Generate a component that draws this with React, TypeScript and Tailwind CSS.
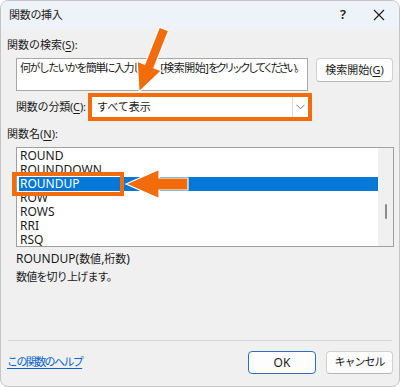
import React from "react";

const FONT = { fontFamily: '"Noto Sans", "Noto Sans CJK JP", sans-serif' };

const ITEMS = ["ROUND", "ROUNDDOWN", "ROUNDUP", "ROW", "ROWS", "RRI", "RSQ"];

function Mn({ c }: { c: string }) {
  return <span className="underline underline-offset-2">{c}</span>;
}

export default function App() {
  return (
    <div className="w-[400px] h-[387px] bg-white text-[12px] text-[#1b1b1b]" style={FONT}>
      <div className="relative w-full h-full flex flex-col rounded-[8px] border border-[#c4c4c4] bg-[#f0f0f0] overflow-hidden">
        {/* title bar */}
        <div className="h-[28px] shrink-0 bg-[#eef2f9] flex items-center pl-[8px] pr-[14px]">
          <span className="text-[11px] tracking-[-0.3px]">関数の挿入</span>
          <span className="ml-auto text-[13px] font-semibold mr-[27px]">?</span>
          <svg width="12" height="12" viewBox="0 0 12 12">
            <path d="M1 1L11 11M11 1L1 11" stroke="#222" strokeWidth="1.2" />
          </svg>
        </div>

        {/* body */}
        <div className="flex-1 flex flex-col px-[6px] pt-[8px]">
          <div className="leading-[16px] text-[11px] whitespace-nowrap">
            関数の検索(<Mn c="S" />):
          </div>

          <div className="flex items-start mt-[5px] pl-[9px]">
            <div className="w-[292px] h-[33px] bg-white border border-[#a8a8a8] px-[3px] pt-[1px] leading-[16px] text-[11px] whitespace-nowrap overflow-hidden">
              <span className="tracking-[-1.6px]">何がしたいかを簡単に入力して、</span>
              <span className="tracking-[-0.5px]">[検索開始]</span>
              <span className="tracking-[-3.1px]"> をクリックしてください。</span>
            </div>
            <button className="ml-[8px] w-[77px] h-[24px] bg-[#fdfdfd] border border-[#d0d0d0] border-b-[#b8b8b8] rounded-[4px] text-[11px] whitespace-nowrap">
              検索開始(<Mn c="G" />)
            </button>
          </div>

          <div className="flex items-center mt-[2px] pl-[9px]">
            <span className="w-[72px] leading-[16px] text-[11px] tracking-[-0.2px] whitespace-nowrap">
              関数の分類(<Mn c="C" />):
            </span>
            <div className="w-[224px] h-[28px] border-[4px] border-[#f36c0c]">
              <div className="h-full bg-white flex items-center pl-[5px]">
                <span className="text-[11px]">すべて表示</span>
                <div className="ml-auto h-full w-[16px] border-l border-[#d8d8d8] flex items-center justify-center">
                  <svg width="9" height="6" viewBox="0 0 9 6">
                    <path d="M0.5 0.8L4.5 4.8L8.5 0.8" stroke="#777" strokeWidth="1" fill="none" />
                  </svg>
                </div>
              </div>
            </div>
          </div>

          <div className="mt-[5px] leading-[16px] text-[11px]">
            関数名(<Mn c="N" />):
          </div>

          <div className="mt-[5px] ml-[9px] w-[378px] h-[100px] bg-white border border-[#a0a0a0] flex">
            <div className="flex-1 pt-[1px] pl-[2px]">
              {ITEMS.map((it) => (
                <div
                  key={it}
                  className={
                    it === "ROUNDUP"
                      ? "h-[14px] leading-[14px] pl-[1px] bg-[#0078d7] text-white"
                      : "h-[14px] leading-[14px] pl-[1px]"
                  }
                >
                  {it}
                </div>
              ))}
            </div>
            <div className="w-[15px] bg-[#f0f0f0] flex justify-center pt-[56px]">
              <div className="w-[2px] h-[15px] bg-[#8a8a8a] rounded-full" />
            </div>
          </div>

          <div className="mt-[3px] pl-[9px] leading-[18px]">
            <div>
              ROUNDUP(<span className="text-[11px]">数値</span>,<span className="text-[11px]">桁数</span>)
            </div>
            <div className="text-[11px] tracking-[-0.8px]">数値を切り上げます。</div>
          </div>

          <div className="mt-auto border-t border-[#d6d6d6] mx-[1px]" />

          <div className="h-[45px] flex items-center">
            <a className="text-[11px] tracking-[-1.6px] text-[#0a62c9] underline underline-offset-2 -mt-[2px]">この関数のヘルプ</a>
            <button className="ml-auto w-[68px] h-[23px] bg-[#fdfdfd] border border-[#2f6fc0] rounded-[4px] text-[12px] -mt-[2px]">
              OK
            </button>
            <button className="ml-[10px] w-[67px] h-[23px] bg-[#fdfdfd] border border-[#d0d0d0] border-b-[#b8b8b8] rounded-[4px] text-[11px] tracking-[-1px] -mt-[2px]">
              キャンセル
            </button>
          </div>
        </div>

        {/* callout highlight and arrows */}
        <div className="absolute left-[11px] top-[171px] w-[112px] h-[24px] border-[4px] border-[#f36c0c] pointer-events-none" />
        <svg className="absolute left-0 top-0 pointer-events-none" width="400" height="387" viewBox="0 0 400 387">
          <polygon
            points="158.4,26.2 167.6,29.8 152.9,66.8 160.4,69.8 138,91 136.2,60.2 143.7,63.2"
            fill="#f36c0c"
            stroke="#fff"
            strokeWidth="1.2"
            strokeLinejoin="miter"
          />
          <polygon
            points="125,183 158,168.5 158,177 187,177 187,189 158,189 158,197.5"
            fill="#f36c0c"
            stroke="#fff"
            strokeWidth="1.2"
          />
        </svg>
      </div>
    </div>
  );
}
